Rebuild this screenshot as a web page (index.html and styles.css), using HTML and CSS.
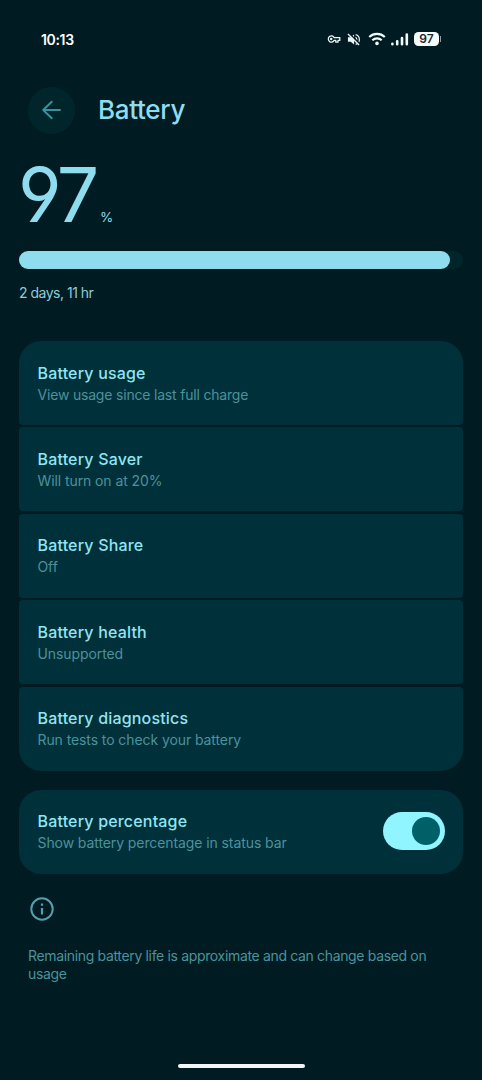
FILE: index.html
```html
<!DOCTYPE html>
<html lang="en">
<head>
<meta charset="utf-8">
<title>Battery</title>
<link rel="stylesheet" href="styles.css">
</head>
<body>
<div class="screen">
  <header class="status">
    <span class="clock">10:13</span>
    <div class="tray">
      <svg class="key" width="14" height="10" viewBox="0 0 14 10" fill="none" stroke="#e8f4f5" stroke-width="1.3" stroke-linejoin="round"><path d="M7.2 3.6A3.1 3.1 0 1 0 7.2 6.4H8.8V8.2H11V6.4H12.8V3.6Z"/><circle cx="4.2" cy="5" r="0.6"/></svg>
      <svg class="mute" width="13" height="13" viewBox="0 0 14 14"><path d="M1 4.7H4L7.6 1.5V12.5L4 9.3H1Z" fill="#e8f4f5"/><path d="M9.3 1.7A5.5 5.5 0 0 1 9.3 12.3M9.2 4.6A2.8 2.8 0 0 1 9.2 9.4" fill="none" stroke="#e8f4f5" stroke-width="1.3"/><path d="M2 0L14 12" stroke="#001c22" stroke-width="1.6"/><path d="M1 1L13 13" stroke="#e8f4f5" stroke-width="1.4"/></svg>
      <svg class="wifi" width="18" height="14" viewBox="0 0 18 14" fill="none" stroke="#f2fafa" stroke-width="2.1"><path d="M1.2 5A11.2 11.2 0 0 1 16.8 5M4.3 8.3A6.8 6.8 0 0 1 13.7 8.3"/><circle cx="9" cy="11.4" r="1.8" fill="#f2fafa" stroke="none"/></svg>
      <svg class="signal" width="18" height="13" viewBox="0 0 18 13" stroke="#f2fafa" stroke-width="2.6" stroke-linecap="round"><path d="M1.4 10.7V11.3M6.2 8.2V11.3M11 5V11.3M15.8 1.5V11.3"/></svg>
      <span class="cell">97</span><i class="nub"></i>
    </div>
  </header>

  <div class="appbar">
    <button class="back" aria-label="Back"><svg width="20" height="20" viewBox="0 0 20 20" fill="none" stroke="#3b929f" stroke-width="1.9" stroke-linecap="round" stroke-linejoin="round"><path d="M18 10H1.2M9.8 1.8L1.2 10L9.8 18.2"/></svg></button>
    <h1>Battery</h1>
  </div>

  <section class="level">
    <div class="reading"><span class="number">97</span><span class="unit">%</span></div>
    <div class="meter"><div class="fill" style="width:97%"></div></div>
    <p class="left">2 days, 11 hr</p>
  </section>

  <main class="list">
    <div class="card"><h2>Battery usage</h2><p>View usage since last full charge</p></div>
    <div class="card"><h2>Battery Saver</h2><p>Will turn on at 20%</p></div>
    <div class="card"><h2>Battery Share</h2><p>Off</p></div>
    <div class="card"><h2>Battery health</h2><p>Unsupported</p></div>
    <div class="card"><h2>Battery diagnostics</h2><p>Run tests to check your battery</p></div>
  </main>

  <div class="card toggle-card">
    <div><h2>Battery percentage</h2><p>Show battery percentage in status bar</p></div>
    <div class="switch"><div class="thumb"></div></div>
  </div>

  <footer class="note">
    <svg width="24" height="24" viewBox="0 0 24 24" fill="none" stroke="#559eac" stroke-width="2"><circle cx="12" cy="12" r="10.7"/><path d="M12 11V17.4M12 6.5V8.8" stroke-width="2.2"/></svg>
    <p>Remaining battery life is approximate and can change based on<br>usage</p>
  </footer>
  <div class="home"></div>
</div>
</body>
</html>
```
FILE: styles.css
```css
* { box-sizing: border-box; margin: 0; padding: 0; }
body { background: #001c22; font-family: Inter, Roboto, sans-serif; }
.screen { width: 482px; height: 1080px; display: flex; flex-direction: column; overflow: hidden; }

.status { height: 78px; padding: 0 41px; display: flex; justify-content: space-between; align-items: center; }
.clock { color: #fff; font-size: 14px; font-weight: 600; letter-spacing: -0.35px; }
.tray { display: flex; align-items: center; }
.mute { margin-left: 6px; }
.wifi { margin-left: 8px; }
.signal { margin-left: 5px; }
.cell { margin-left: 5px; width: 25px; height: 14px; border-radius: 4.5px; background: #f6fbfb; color: #14292d; font-size: 12px; font-weight: 600; line-height: 14px; text-align: center; }
.nub { width: 1px; height: 6px; margin-left: 1px; background: #8ba1a4; }

.appbar { height: 64px; padding-left: 28px; display: flex; align-items: center; gap: 23px; }
.back { width: 47px; height: 47px; border: 0; border-radius: 50%; background: #00262c; display: flex; align-items: center; justify-content: center; }
h1 { color: #90dcef; font-size: 26px; font-weight: 500; letter-spacing: -0.3px; line-height: 30px; }

.level { height: 199px; padding: 0 19px; }
.reading { height: 109px; display: flex; align-items: baseline; color: #90dcef; }
.number { width: 76px; font-size: 75px; font-weight: 400; line-height: 105px; letter-spacing: -2px; margin-left: -1px; font-feature-settings: "cv04"; white-space: nowrap; }
.unit { font-size: 13.5px; margin-left: 6px; }
.meter { height: 18px; border-radius: 9px; background: #00262c; }
.fill { height: 18px; border-radius: 9px; background: #90dcef; }
.left { margin-top: 15px; color: #90cbd8; font-size: 14px; line-height: 18px; letter-spacing: -0.5px; }

.list { margin: 0 19px; display: flex; flex-direction: column; gap: 2.4px; }
.card { height: 84px; padding: 20.5px 18.5px 0; border-radius: 4px; background: #00303a; }
.card:first-child { border-radius: 22px 22px 4px 4px; }
.card:last-child { border-radius: 4px 4px 22px 22px; }
h2 { color: #91e5f0; font-size: 16px; font-weight: 500; line-height: 22px; letter-spacing: 0.18px; }
.card p { color: #4c929b; font-size: 14px; line-height: 21px; letter-spacing: -0.09px; }
.card:first-child p { letter-spacing: -0.19px; }
.toggle-card { margin: 19.4px 19px 0; padding-top: 20px; border-radius: 22px; display: flex; justify-content: space-between; }
.switch { width: 62px; height: 38px; margin-top: 2px; padding: 5px; border-radius: 19px; background: #91f5ff; display: flex; justify-content: flex-end; }
.thumb { width: 28px; height: 28px; border-radius: 50%; background: #006067; }

.note { padding: 23px 28px 0 30px; }
.note svg { display: block; }
.note p { margin: 26.5px 0 0 -2px; color: #4c929b; font-size: 14px; line-height: 17.5px; letter-spacing: -0.34px; white-space: nowrap; }
.home { width: 127px; height: 4px; margin: auto auto 12px; border-radius: 2px; background: #f3f6f6; }
```
